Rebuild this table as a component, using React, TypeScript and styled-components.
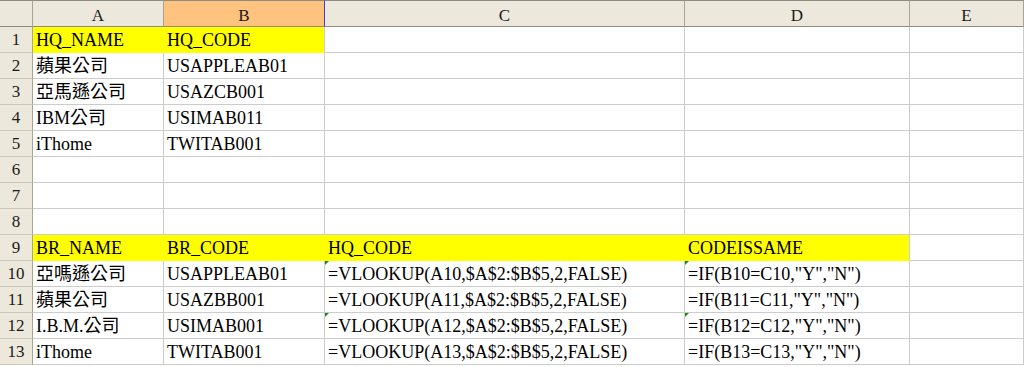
import React from "react";
import styled, { createGlobalStyle } from "styled-components";

const GlobalStyle = createGlobalStyle`
  html, body {
    margin: 0;
    padding: 0;
    background: #ffffff;
  }
  body {
    font-family: "Liberation Serif", "Noto Sans CJK TC", serif;
    color: #000;
  }
`;

const Sheet = styled.div`
  display: grid;
  grid-template-columns: 33px 131px 161px 360px 225px 1fr;
  grid-template-rows: 27px;
  grid-auto-rows: 26px;
  width: 1024px;
  height: 367px;
  overflow: hidden;
`;

const Corner = styled.div`
  background: #ece9dc;
  border-top: 1px solid #8c8c84;
  border-bottom: 1px solid #8c8c84;
  border-right: 1px solid #a7a498;
`;

const ColHeader = styled.div<{ $selected?: boolean }>`
  display: flex;
  align-items: center;
  justify-content: center;
  padding-top: 4px;
  font-size: 17px;
  color: #1a1a1a;
  background: ${(p) => (p.$selected ? "#fdc37f" : "#ece9dc")};
  border-top: 1px solid #8c8c84;
  border-bottom: 1px solid #8c8c84;
  border-right: 1px solid ${(p) => (p.$selected ? "#4040c4" : "#a7a498")};
`;

const RowHeader = styled.div`
  display: flex;
  align-items: flex-end;
  justify-content: center;
  padding-bottom: 2px;
  font-size: 17px;
  color: #1a1a1a;
  background: #ece9dc;
  border-right: 1px solid #a7a498;
  border-bottom: 1px solid #cbc8bb;
`;

const Cell = styled.div<{ $fill?: string; $edge?: boolean; $flag?: boolean }>`
  position: relative;
  display: flex;
  align-items: flex-end;
  padding: 0 0 1px 3px;
  font-size: 18px;
  white-space: nowrap;
  background: ${(p) => p.$fill ?? "#fff"};
  border-bottom: 1px solid ${(p) => p.$fill ?? "#cccccc"};
  border-right: 1px solid ${(p) => (p.$fill && !p.$edge ? p.$fill : "#cccccc")};

  &::before {
    content: "";
    display: ${(p) => (p.$flag ? "block" : "none")};
    position: absolute;
    top: 0;
    left: 0;
    border-top: 4px solid #1a8a1a;
    border-right: 4px solid transparent;
  }
`;

const COLS = ["A", "B", "C", "D", "E"];
const YELLOW = "#ffff00";

interface RowData {
  values: string[];
  filled?: number;
  flags?: number[];
}

const ROWS: RowData[] = [
  { values: ["HQ_NAME", "HQ_CODE"], filled: 2 },
  { values: ["蘋果公司", "USAPPLEAB01"] },
  { values: ["亞馬遜公司", "USAZCB001"] },
  { values: ["IBM公司", "USIMAB011"] },
  { values: ["iThome", "TWITAB001"] },
  { values: [] },
  { values: [] },
  { values: [] },
  { values: ["BR_NAME", "BR_CODE", "HQ_CODE", "CODEISSAME"], filled: 4 },
  {
    values: ["亞嗎遜公司", "USAPPLEAB01", "=VLOOKUP(A10,$A$2:$B$5,2,FALSE)", '=IF(B10=C10,"Y","N")'],
    flags: [2, 3],
  },
  {
    values: ["蘋果公司", "USAZBB001", "=VLOOKUP(A11,$A$2:$B$5,2,FALSE)", '=IF(B11=C11,"Y","N")'],
  },
  {
    values: ["I.B.M.公司", "USIMAB001", "=VLOOKUP(A12,$A$2:$B$5,2,FALSE)", '=IF(B12=C12,"Y","N")'],
    flags: [2, 3],
  },
  {
    values: ["iThome", "TWITAB001", "=VLOOKUP(A13,$A$2:$B$5,2,FALSE)", '=IF(B13=C13,"Y","N")'],
  },
];

const App = () => {
  return (
    <>
      <GlobalStyle />
      <Sheet>
        <Corner />
        {COLS.map((c) => (
          <ColHeader key={c} $selected={c === "B"}>
            {c}
          </ColHeader>
        ))}
        {ROWS.map((row, r) => (
          <React.Fragment key={r}>
            <RowHeader>{r + 1}</RowHeader>
            {COLS.map((_, c) => {
              const filled = row.filled !== undefined && c < row.filled;
              return (
                <Cell
                  key={c}
                  $fill={filled ? YELLOW : undefined}
                  $edge={filled && c === (row.filled ?? 0) - 1}
                  $flag={row.flags?.includes(c)}
                >
                  {row.values[c] ?? ""}
                </Cell>
              );
            })}
          </React.Fragment>
        ))}
      </Sheet>
    </>
  );
};

export default App;
